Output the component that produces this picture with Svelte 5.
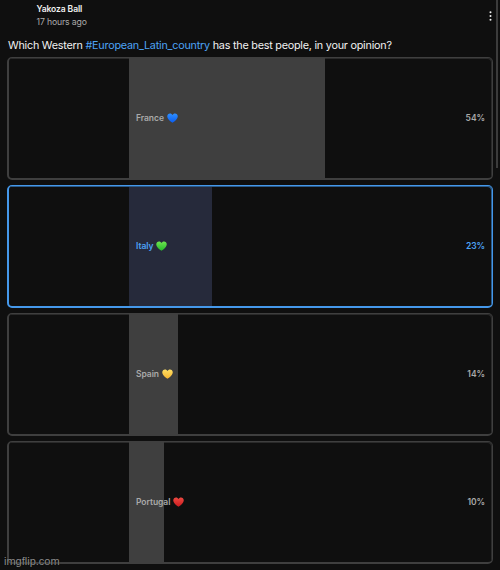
<script lang="ts">
  type Option = {
    label: string;
    percent: number;
    fill: number;
    heart: string;
    light: string;
    dark: string;
    selected?: boolean;
  };

  const options: Option[] = [
    { label: 'France', percent: 54, fill: 54, heart: 'blue', light: '#2f90ff', dark: '#0a5cf0' },
    { label: 'Italy', percent: 23, fill: 23, heart: 'green', light: '#6fe650', dark: '#24b82a', selected: true },
    { label: 'Spain', percent: 14, fill: 13.5, heart: 'yellow', light: '#ffe066', dark: '#f7b52e' },
    { label: 'Portugal', percent: 10, fill: 9.6, heart: 'red', light: '#ee4a42', dark: '#cb1a1e' }
  ];
</script>

<div class="post">
  <header>
    <div>
      <div class="name">Yakoza Ball</div>
      <div class="time">17 hours ago</div>
    </div>
    <svg class="more" width="3" height="10" viewBox="0 0 3 10">
      <circle cx="1.5" cy="1.3" r="1" />
      <circle cx="1.5" cy="5" r="1" />
      <circle cx="1.5" cy="8.7" r="1" />
    </svg>
  </header>

  <p class="question">
    Which Western <span class="tag">#European_Latin_country</span> has the best people, in your opinion?
  </p>

  <div class="poll">
    {#each options as o}
      <div class="option" class:selected={o.selected}>
        <div class="track">
          <div class="fill" style="width: {o.fill}%"></div>
          <div class="row">
            <span class="label">{o.label}</span>
            <svg class="heart" width="11" height="10" viewBox="0 0 22 20">
              <defs>
                <linearGradient id="heart-{o.heart}" x1="0" y1="0" x2="0" y2="1">
                  <stop offset="0" stop-color={o.light} />
                  <stop offset="1" stop-color={o.dark} />
                </linearGradient>
              </defs>
              <path
                fill="url(#heart-{o.heart})"
                d="M11 19.5C7.5 17 .5 12.5 .5 6.5C.5 3 3 .8 6 .8C8.3 .8 10 2 11 4C12 2 13.7 .8 16 .8C19 .8 21.5 3 21.5 6.5C21.5 12.5 14.5 17 11 19.5Z"
              />
            </svg>
            <span class="percent">{o.percent}%</span>
          </div>
        </div>
      </div>
    {/each}
  </div>

  <div class="scrollbar"></div>
  <div class="watermark">imgflip.com</div>
</div>

<style>
  :global(body) { background: #0f0f0f; }
  .post {
    position: relative;
    width: 500px;
    height: 570px;
    overflow: hidden;
    box-sizing: border-box;
    padding: 4px 7px 0;
    background: #0f0f0f;
    color: #f1f1f1;
    font-family: Inter, "Liberation Sans", sans-serif;
  }
  header {
    display: flex;
    justify-content: space-between;
    height: 34px;
    padding-left: 29.5px;
  }
  .name { font-size: 8.5px; line-height: 11px; font-weight: 600; letter-spacing: -0.08px; }
  .time { margin-top: 2px; font-size: 8.7px; line-height: 11px; letter-spacing: -0.15px; color: #aaa; }
  .more { margin: 7px 1.5px 0 0; fill: #f1f1f1; }
  .question {
    margin: 0 0 0 1px;
    height: 19px;
    font-size: 10.8px;
    line-height: 15px;
    letter-spacing: -0.23px;
    white-space: nowrap;
  }
  .tag { color: #4da3f5; }
  .poll { display: flex; flex-direction: column; gap: 5px; }
  .option {
    --line: #3f3f3f;
    box-sizing: border-box;
    height: 123px;
    border: solid var(--line);
    border-width: 1px 1px 2px 2px;
    border-radius: 5px;
    padding-left: 120px;
    color: #aaa;
    box-shadow: inset -1px 1px 0 #2a2a2a;
  }
  .track { position: relative; height: 100%; }
  .fill { height: 100%; background: #3f3f3f; }
  .selected {
    --line: #4598ea;
    color: #4da3f5;
    box-shadow: inset -1px 1px 0 #2a5a8a;
  }
  .selected .fill {
    box-sizing: border-box;
    background: #262a3b;
    border-top: 1px solid #2a5a8a;
  }
  .row {
    position: absolute;
    inset: 0;
    display: flex;
    align-items: center;
    padding: 0 7px 1px;
    font-size: 8.5px;
    font-weight: 600;
    letter-spacing: -0.05px;
  }
  .heart { margin-left: 3px; }
  .percent { margin-left: auto; }
  .scrollbar {
    position: absolute;
    top: 0;
    right: 2px;
    width: 2px;
    height: 168px;
    background: #3c3c3c;
  }
  .watermark {
    position: absolute;
    left: 4px;
    bottom: 2px;
    font-family: "Liberation Sans", Arial, sans-serif;
    font-size: 11px;
    line-height: 13px;
    color: #8c8c8c;
    text-shadow: 0 0 1px #000;
  }
</style>
